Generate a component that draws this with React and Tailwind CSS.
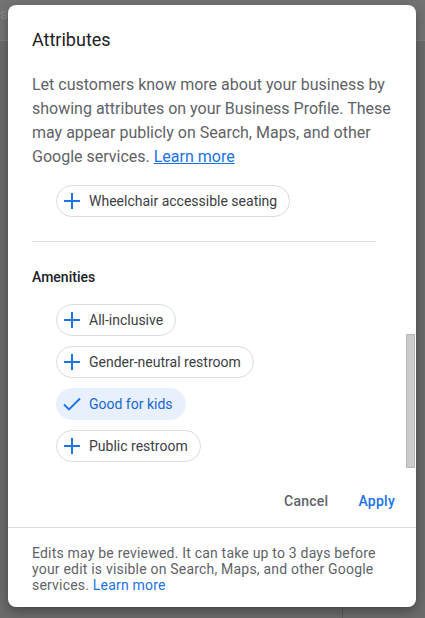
const amenities = [
  { label: "All-inclusive", on: false },
  { label: "Gender-neutral restroom", on: false },
  { label: "Good for kids", on: true },
  { label: "Public restroom", on: false },
];

function PlusIcon() {
  return (
    <svg width="18" height="18" viewBox="0 0 18 18" fill="none" stroke="#1a73e8" strokeWidth="2">
      <path d="M1 9h16M9 1v16" />
    </svg>
  );
}

function CheckIcon() {
  return (
    <svg width="18" height="18" viewBox="0 0 18 18" fill="none" stroke="#1a73e8" strokeWidth="1.9">
      <path d="M1 9.5l5 5L17 3.5" />
    </svg>
  );
}

function Chip({ label, on }) {
  return (
    <div
      className={
        "flex h-8 w-fit items-center gap-2 rounded-full pl-[6px] pr-3 text-sm " +
        (on
          ? "border border-[#e8f0fe] bg-[#e8f0fe] text-[#1967d2]"
          : "border border-[#dadce0] bg-white text-[#3c4043]")
      }
    >
      {on ? <CheckIcon /> : <PlusIcon />}
      <span>{label}</span>
    </div>
  );
}

export default function App() {
  return (
    <div className="relative h-[618px] w-[425px] overflow-hidden bg-[#6b6b6b] font-['Roboto',sans-serif]">
      {/* page behind the overlay */}
      <div className="h-[41px] border-b border-[#7d7d7d] bg-[#737373] pt-1 text-sm text-[#8a8a8a]">
        se
      </div>
      <div className="ml-[342px] h-full border-l border-[#5a5a5a]" />

      {/* dialog */}
      <div className="absolute left-2 top-[5px] flex h-[602px] w-[408px] flex-col rounded-lg bg-white shadow-[0_4px_12px_rgba(0,0,0,0.35)]">
        <div className="relative h-[476px] pl-6 pr-6 pt-[23px]">
          <h2 className="text-[18px] leading-6 text-[#202124]">Attributes</h2>
          <p className="mt-[21px] w-[360px] text-base leading-6 text-[#5f6368]">
            Let customers know more about your business by showing attributes on your Business
            Profile. These may appear publicly on Search, Maps, and other Google services.{" "}
            <span className="text-[#1a73e8] underline">Learn more</span>
          </p>
          <div className="ml-6 mt-4">
            <Chip label="Wheelchair accessible seating" on={false} />
          </div>
          <div className="mt-6 h-px w-[344px] bg-[#dadce0]" />
          <h3 className="mt-[25px] text-sm font-medium leading-5 text-[#202124]">Amenities</h3>
          <div className="ml-6 mt-[17px] flex flex-col gap-[10px]">
            {amenities.map((a) => (
              <Chip key={a.label} {...a} />
            ))}
          </div>
          {/* scrollbar thumb */}
          <div className="absolute right-[1px] top-[329px] h-[134px] w-[9px] border border-[#b8b8b8] bg-[#cbcbcb]" />
        </div>

        <div className="flex h-[46px] items-start justify-end gap-[14px] pr-[13px] pt-[2px]">
          <button className="h-9 px-2 text-sm font-medium tracking-[0.25px] text-[#5f6368]">
            Cancel
          </button>
          <button className="h-9 px-2 text-sm font-medium tracking-[0.25px] text-[#1a73e8]">
            Apply
          </button>
        </div>
        <div className="h-px bg-[#dadce0]" />
        <p className="w-[370px] pl-6 pt-[17px] text-sm leading-4 tracking-[0.2px] text-[#5f6368]">
          Edits may be reviewed. It can take up to 3 days before your edit is visible on Search,
          Maps, and other Google services. <span className="text-[#1a73e8]">Learn more</span>
        </p>
      </div>
    </div>
  );
}
